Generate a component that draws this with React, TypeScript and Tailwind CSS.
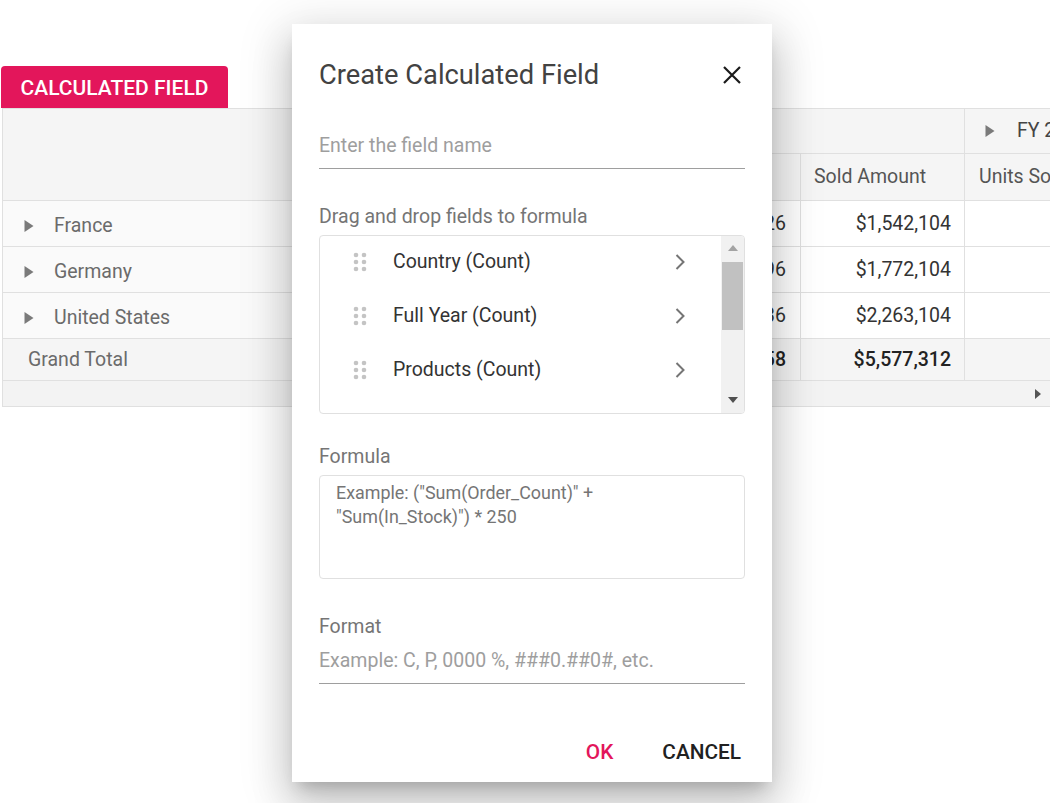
import React from "react";

const Tri = ({ className = "" }: { className?: string }) => (
  <svg width="10" height="14" viewBox="0 0 10 14" className={className}>
    <path d="M0.5 1 L9.5 7 L0.5 13 Z" fill="#7a7a7a" />
  </svg>
);

const Dots = () => (
  <svg width="14" height="20" viewBox="0 0 14 20">
    {[3, 10, 17].map((y) =>
      [3, 11].map((x) => <circle key={`${x}-${y}`} cx={x} cy={y} r="2.3" fill="#c4c4c4" />)
    )}
  </svg>
);

const Chevron = () => (
  <svg width="12" height="18" viewBox="0 0 12 18">
    <path d="M2.5 2 L9.5 9 L2.5 16" fill="none" stroke="#757575" strokeWidth="2" />
  </svg>
);

function Table() {
  const rows = [
    { name: "France", a: "26", b: "$1,542,104" },
    { name: "Germany", a: "96", b: "$1,772,104" },
    { name: "United States", a: "36", b: "$2,263,104" },
  ];
  const cell = "border-l border-[#e0e0e0] flex items-center";
  return (
    <div className="ml-[2px] w-[1048px] overflow-hidden border-y border-l border-[#e0e0e0] text-[19.5px]">
      <div className="w-[1200px]">
        <div className="flex h-[91px] bg-[#f5f5f5]">
          <div className="w-[471px] shrink-0" />
          <div className="flex flex-col">
            <div className="flex h-[45px] border-b border-[#e0e0e0]">
              <div className={`${cell} w-[490px] border-l-0`} />
              <div className={`${cell} w-[200px] pl-[20px] gap-[22px] text-[#444]`}>
                <Tri />
                <span>FY 2015</span>
              </div>
            </div>
            <div className="flex h-[46px] text-[#555]">
              <div className={`${cell} w-[164px] border-l-0`} />
              <div className={`${cell} w-[162px]`} />
              <div className={`${cell} w-[164px] pl-[13px]`}>Sold Amount</div>
              <div className={`${cell} w-[200px] pl-[14px]`}>Units Sold</div>
            </div>
          </div>
        </div>
        {rows.map((r) => (
          <div key={r.name} className="flex h-[46px] border-t border-[#e0e0e0]">
            <div className="w-[471px] shrink-0 bg-[#fafafa] flex items-center pl-[21px] gap-[20px] text-[#6b6b6b] pt-[4px]">
              <Tri />
              <span>{r.name}</span>
            </div>
            <div className={`${cell} w-[164px] bg-white`} />
            <div className={`${cell} w-[162px] bg-white justify-end pr-[14px] text-[#333]`}>{r.a}</div>
            <div className={`${cell} w-[164px] bg-white justify-end pr-[13px] text-[#333]`}>{r.b}</div>
            <div className={`${cell} w-[200px] bg-white`} />
          </div>
        ))}
        <div className="flex h-[42px] border-t border-[#e0e0e0] bg-[#f5f5f5]">
          <div className="w-[471px] shrink-0 flex items-center pl-[25px] text-[#6b6b6b]">Grand Total</div>
          <div className={`${cell} w-[164px]`} />
          <div className={`${cell} w-[162px] justify-end pr-[14px] font-medium text-[#222]`}>58</div>
          <div className={`${cell} w-[164px] justify-end pr-[13px] font-medium text-[#222]`}>$5,577,312</div>
          <div className={`${cell} w-[200px]`} />
        </div>
      </div>
      <div className="h-[26px] border-t border-[#e0e0e0] bg-[#f3f3f3] flex items-center justify-end pr-[9px]">
        <svg width="6" height="10" viewBox="0 0 6 10">
          <path d="M0 0 L6 5 L0 10 Z" fill="#555" />
        </svg>
      </div>
    </div>
  );
}

function Dialog() {
  const items = ["Country (Count)", "Full Year (Count)", "Products (Count)"];
  return (
    <div className="absolute left-[292px] top-[24px] w-[480px] h-[758px] bg-white shadow-[0_11px_15px_-7px_rgba(0,0,0,0.2),0_24px_38px_3px_rgba(0,0,0,0.14),0_9px_46px_8px_rgba(0,0,0,0.12)] px-[27px] flex flex-col">
      <div className="mt-[35px] h-[32px] flex items-center justify-between">
        <span className="text-[27.3px] leading-[32px] text-[#424242]">Create Calculated Field</span>
        <svg width="20" height="20" viewBox="0 0 20 20" className="mr-[3px] -mt-[1px]">
          <path d="M2 2 L18 18 M18 2 L2 18" stroke="#1a1a1a" strokeWidth="2.2" />
        </svg>
      </div>
      <div className="mt-[43px] pb-[10px] border-b border-[#9e9e9e] text-[19.5px] leading-[24px] text-[#9e9e9e]">
        Enter the field name
      </div>
      <div className="mt-[36px] text-[19.5px] leading-[24px] text-[#757575]">Drag and drop fields to formula</div>
      <div className="mt-[6px] h-[179px] border border-[#e0e0e0] rounded-[4px] flex overflow-hidden">
        <div className="flex-1 flex flex-col -mt-[1px]">
          {items.map((it) => (
            <div key={it} className="h-[54px] flex items-center pl-[33px] shrink-0">
              <Dots />
              <span className="ml-[26px] text-[19.5px] text-[#333] flex-1">{it}</span>
              <span className="mr-[35px] flex items-center"><Chevron /></span>
            </div>
          ))}
        </div>
        <div className="w-[23px] bg-[#f1f1f1] flex flex-col items-center">
          <svg width="10" height="6" viewBox="0 0 10 6" className="mt-[9px]">
            <path d="M0 6 L5 0 L10 6 Z" fill="#a3a3a3" />
          </svg>
          <div className="mt-[11px] w-[21px] h-[68px] bg-[#c1c1c1]" />
          <div className="flex-1" />
          <svg width="10" height="6" viewBox="0 0 10 6" className="mb-[10px]">
            <path d="M0 0 L10 0 L5 6 Z" fill="#505050" />
          </svg>
        </div>
      </div>
      <div className="mt-[31px] text-[19.5px] leading-[24px] text-[#757575]">Formula</div>
      <div className="mt-[6px] h-[104px] border border-[#e0e0e0] rounded-[4px] pl-[16px] pt-[5px] text-[17.9px] leading-[24px] text-[#757575]">
        Example: ("Sum(Order_Count)" +<br />"Sum(In_Stock)") * 250
      </div>
      <div className="mt-[36px] text-[19.5px] leading-[24px] text-[#757575]">Format</div>
      <div className="mt-[10px] pb-[10px] border-b border-[#9e9e9e] text-[19.5px] leading-[24px] text-[#9e9e9e]">
        Example: C, P, 0000 %, ###0.##0#, etc.
      </div>
      <div className="mt-[51px] h-[36px] flex items-center justify-end gap-[49px] pr-[4px] text-[20.8px] font-medium">
        <span className="text-[#e3165b]">OK</span>
        <span className="text-[#212121]">CANCEL</span>
      </div>
    </div>
  );
}

export default function App() {
  return (
    <div className="relative w-[1053px] h-[803px] bg-white overflow-hidden" style={{ fontFamily: "Roboto, 'Liberation Sans', sans-serif" }}>
      <div className="pt-[66px]">
        <button className="ml-[1px] h-[42px] w-[227px] bg-[#e3165b] text-white text-[21px] font-medium rounded-t-[4px] flex items-center justify-center pt-[3px]">
          CALCULATED FIELD
        </button>
        <Table />
      </div>
      <Dialog />
    </div>
  );
}
